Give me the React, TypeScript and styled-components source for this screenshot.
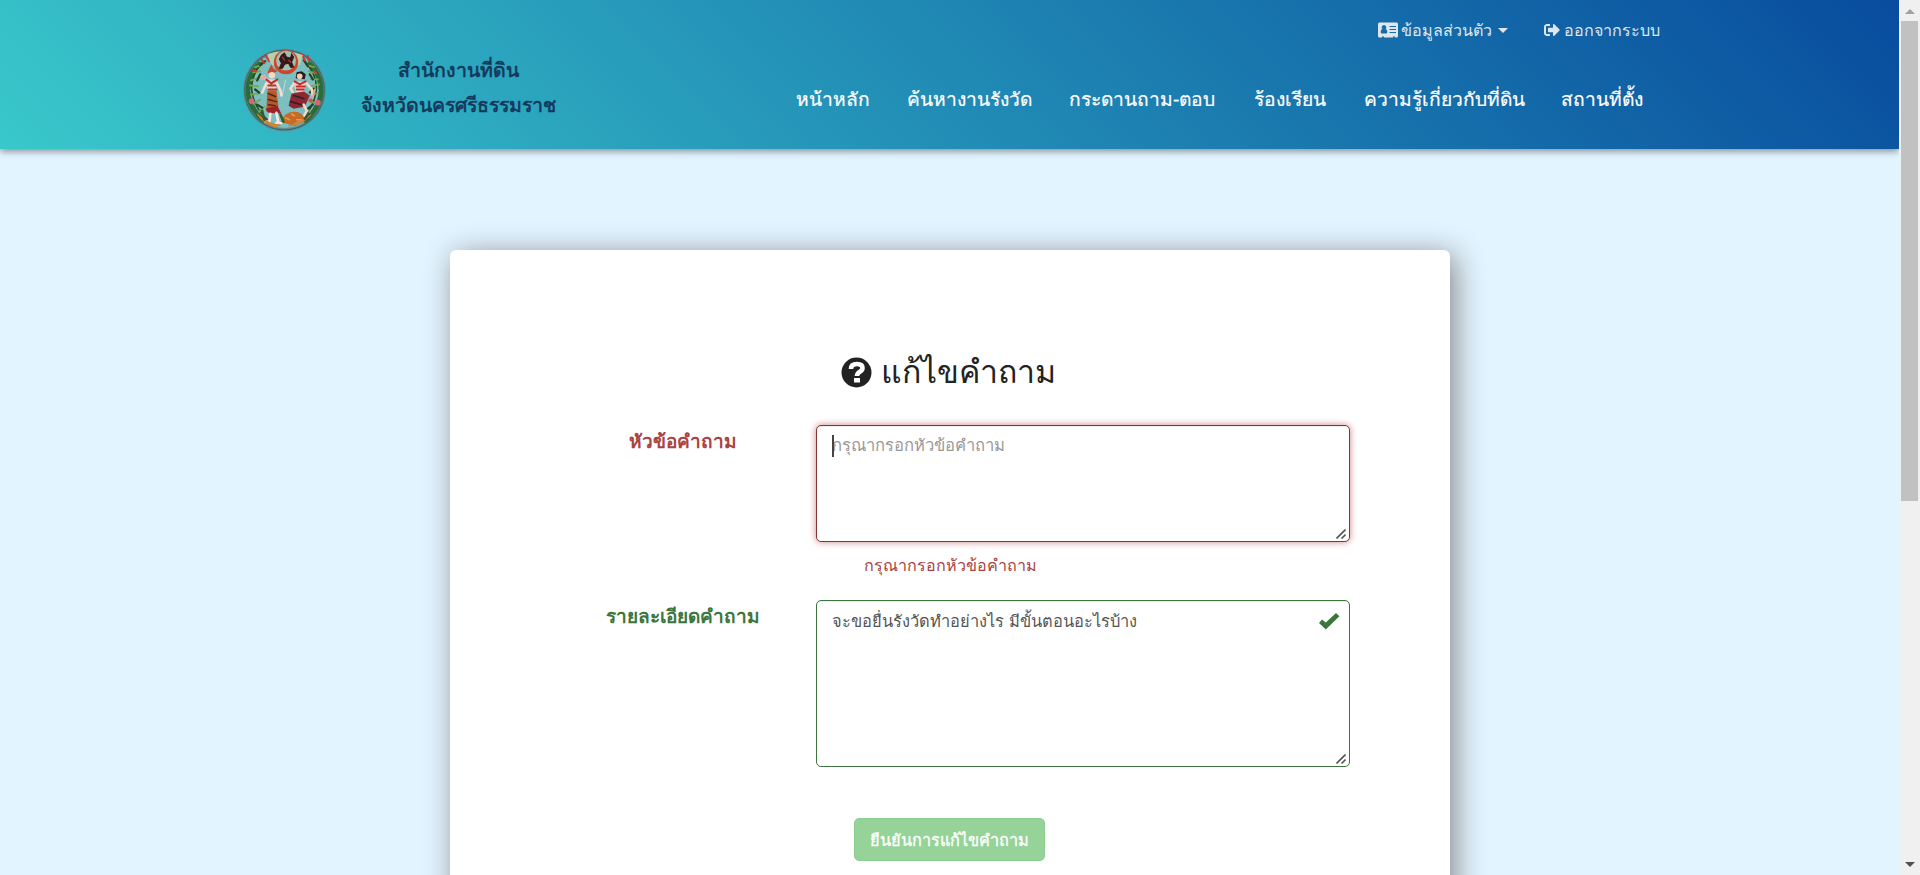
import React from 'react';
import styled, { createGlobalStyle } from 'styled-components';
import { FaSignOutAlt } from 'react-icons/fa';

const GlobalStyle = createGlobalStyle`
  *, *::before, *::after { box-sizing: border-box; }
  body {
    margin: 0;
    overflow: hidden;
    background: #e2f4ff;
    color: #222;
    font-family: 'Liberation Sans', sans-serif;
  }
`;

const Screen = styled.div`
  display: grid;
  grid-template-columns: minmax(0, 1fr) 21px;
  height: 875px;
  overflow: hidden;
`;

const Page = styled.div`
  height: 875px;
  overflow: hidden;
  background: #e2f4ff;
`;

const Header = styled.header`
  display: flex;
  height: 149px;
  padding-left: 242px;
  background: linear-gradient(45deg, #39c8cb, #084c9e);
  box-shadow: 0 2px 7px rgba(0, 0, 0, 0.45);
`;

const Brand = styled.div`
  display: flex;
  align-items: flex-start;
  gap: 31px;
  width: 554px;
  height: 85px;
  margin-top: 48px;
`;

const BrandName = styled.div`
  width: 200px;
  margin-top: 5px;
  color: #12375a;
  font-size: 19.5px;
  line-height: 35px;
  text-align: center;
  white-space: nowrap;
  -webkit-text-stroke: 0.6px #12375a;
`;

const Menus = styled.div`
  display: flex;
  flex-direction: column;
  gap: 43px;
  padding-top: 18px;
`;

const UserMenu = styled.div`
  display: flex;
  gap: 36px;
  padding-left: 582px;
  color: #dfe6ee;
`;

const UserLink = styled.a<{ $gap: number }>`
  display: flex;
  align-items: center;
  gap: ${(p) => p.$gap}px;
  font-size: 16.1px;
  line-height: 24px;
  white-space: nowrap;
`;

const Caret = styled.i`
  margin-left: 3px;
  border: 5px solid transparent;
  border-top-color: currentColor;
  border-bottom: 0;
`;

const Nav = styled.nav`
  display: flex;
`;

const NavLink = styled.a<{ $w: number }>`
  width: ${(p) => p.$w}px;
  color: #fff;
  font-size: 19.2px;
  line-height: 30px;
  white-space: nowrap;
  -webkit-text-stroke: 0.2px #fff;
`;

const Card = styled.main`
  width: 1000px;
  height: 800px;
  margin: 101px 0 0 450px;
  padding: 100px 100px 0;
  border-radius: 6px;
  background: #fff;
  box-shadow: 5px 5px 30px #888;
`;

const Title = styled.h1`
  display: flex;
  align-items: center;
  justify-content: center;
  gap: 9px;
  margin: 0 3px 31px 0;
  font-size: 32px;
  font-weight: 400;
  line-height: 44px;
  white-space: nowrap;
`;

const FormRow = styled.div`
  display: grid;
  grid-template-columns: 266px 534px;
  margin-bottom: 24px;
`;

const Label = styled.label<{ $color: string }>`
  padding-top: 2px;
  color: ${(p) => p.$color};
  font-size: 19px;
  font-weight: 700;
  line-height: 30px;
  text-align: center;
  white-space: nowrap;
`;

const Field = styled.div`
  position: relative;
`;

const InputBox = styled.div`
  position: relative;
`;

const TextArea = styled.textarea<{ $h: number; $border: string; $size: number; $glow?: boolean }>`
  display: block;
  width: 534px;
  height: ${(p) => p.$h}px;
  padding: 8px 15px;
  border: 1px solid ${(p) => p.$border};
  border-radius: 5px;
  outline: 0;
  background: #fff;
  box-shadow: ${(p) =>
    p.$glow
      ? 'inset 0 1px 1px rgba(0, 0, 0, 0.075), 0 0 7px #ce8483'
      : 'inset 0 1px 1px rgba(0, 0, 0, 0.075)'};
  color: #555;
  font-family: inherit;
  font-size: ${(p) => p.$size}px;
  line-height: 24px;
  resize: none;
  &::placeholder { color: #999; }
`;

const TextCursor = styled.span`
  position: absolute;
  top: 10px;
  left: 16px;
  width: 2px;
  height: 22px;
  background: #444;
`;

const ResizeGrip = styled.svg`
  position: absolute;
  right: 4px;
  bottom: 3px;
  width: 10px;
  height: 10px;
  stroke: #555;
  stroke-width: 1.6;
`;

const ValidMark = styled.svg`
  position: absolute;
  top: 13px;
  right: 10px;
  width: 21px;
  height: 17px;
  fill: #3c763d;
`;

const ErrorText = styled.div`
  margin-top: 11px;
  padding-left: 48px;
  color: #a94442;
  font-size: 16.1px;
  line-height: 24px;
`;

const ErrorRow = styled(FormRow)`
  margin-bottom: 23px;
`;

const Actions = styled.div`
  display: flex;
  justify-content: center;
  padding: 27px 1px 0 0;
`;

const SubmitButton = styled.button`
  width: 191px;
  height: 43px;
  padding: 0;
  border: 1px solid #8bcf8d;
  border-radius: 5px;
  background: #96d398;
  color: #fff;
  font-family: inherit;
  font-size: 16.3px;
  line-height: 24px;
  white-space: nowrap;
  -webkit-text-stroke: 0.3px #fff;
`;

const ScrollTrack = styled.div`
  display: flex;
  flex-direction: column;
  align-items: center;
  height: 875px;
  background: #f0f0f0;
`;

const ScrollThumb = styled.div`
  width: 17px;
  height: 480px;
  margin: 7px 0 361px;
  background: #c1c1c1;
`;

const ScrollArrow = styled.i<{ $down?: boolean }>`
  margin-top: ${(p) => (p.$down ? 0 : 9)}px;
  border: 5px solid transparent;
  ${(p) => (p.$down ? 'border-top-color: #505050; border-bottom: 0;' : 'border-bottom-color: #a0a0a0; border-top: 0;')}
`;

const Emblem = () => (
  <svg width="85" height="85" viewBox="0 0 84 84" fill="none" strokeLinecap="round">
    <circle cx="42" cy="41.5" r="41" fill="#5f8f92" />
    <circle cx="42" cy="41.5" r="39.3" stroke="#37696f" strokeWidth="1.2" strokeDasharray="1.5 1" />
    <circle cx="42" cy="41.5" r="37.5" fill="#7dbfc0" />
    <path d="M17 16Q5 28 6 45q2 15 16 27M67 16q12 12 11 29-2 15-16 27" stroke="#2c6b39" strokeWidth="5" strokeDasharray="3 2" />
    <path d="M21 13Q7 29 10 44q2 14 15 27M62 13q14 16 11 31-2 14-14 27" stroke="#234d2b" strokeWidth="1.6" />
    <path d="M20 17l-7 2m5 4l-7 1m4 6l-6 2m7 6l-8-1m8 8l-7 1m9 5l-7 4m11 3l-5 5M64 17l7 2m-5 4l7 2m-5 6l7 0m-7 7l8-2m-8 9l7 0m-9 7l7 3m-11 3l5 5" stroke="#7aa654" strokeWidth="1.8" />
    <path d="M23 13l-5 4m0 9l-3 6m-2 9l4 3m-2 12l5 3M61 12l4 6m2 8l3 5m1 9l-4 4m3 12l-5 4" stroke="#204827" strokeWidth="2.2" />
    <path d="M23 7l4 6m-8-2l3 4m37-9l3 6m3-4l1 5M11 22l3 1m57 0l2 2" stroke="#ce3a32" strokeWidth="2" />
    <path d="M25 6Q42 0 60 7L57 17H29z" fill="#b9cfaa" />
    <circle cx="43.5" cy="14" r="12" fill="#cf4430" />
    <circle cx="43.5" cy="12.5" r="9.8" fill="#a5bfae" />
    <path d="M39 7l3-2 2 4 4 1 1-4 2 3-2 5 2 5h-3l-2-4-4 1-2 4-3 0 2-5-2-4z" fill="#35191a" stroke="#35191a" />
    <path d="M40 9l2 3m4 0l2 2" stroke="#b64331" />
    <path d="M43 32l-3 14" stroke="#bed8d2" />
    <path d="M27 20l2-4 2 4 4 3-4 2h-6z" fill="#c54a30" />
    <circle cx="29.5" cy="27" r="3.2" fill="#f2d9c6" />
    <path d="M26 32l-6-4m4 7l-4 9m14-10l4 8 1 5" stroke="#f2dfd2" strokeWidth="2.6" />
    <path d="M24 31h11l-2 12h-8z" fill="#e5d8cc" />
    <path d="M24 31l5 4 6-4m-9 6h7m-7 4h8" stroke="#bf2e2c" strokeWidth="2" />
    <path d="M25 42h9l2 15-4 6H24z" fill="#b65b27" />
    <path d="M26 45l7 3m-7 3l8 2m-8 3l7 1" stroke="#5a2022" strokeWidth="1.5" />
    <path d="M23 60l12-3 4 8-13-1z" fill="#a02029" />
    <path d="M28 65l-1 8m7-9l2 10m-10-1h-3m11 1h5" stroke="#f5e7da" strokeWidth="2.6" />
    <path d="M53 30l1-6 5-1 4 3-1 5z" fill="#291b1d" />
    <circle cx="57" cy="28" r="2.8" fill="#edcfbb" />
    <path d="M52 34l-4 6 4 7m11-13l6 7 1 6" stroke="#f0d9cd" strokeWidth="2.6" />
    <path d="M51 33h12l-2 11h-8z" fill="#ead5c9" />
    <path d="M52 33l5 3 6-3m-9 5h8m-8 3h7" stroke="#c52b2e" strokeWidth="2" />
    <path d="M49 45l12-2 6 4-5 11-11 2-5-3z" fill="#8e2731" />
    <path d="M51 47l10 3m-13 3l11 3" stroke="#311f29" strokeWidth="1.6" />
    <path d="M61 56l3 6-4 8" stroke="#f2d9ca" strokeWidth="2.6" />
    <path d="M38 73q5-11 14-10 8 0 11 9l-11 5z" fill="#c56a27" />
    <path d="M43 69l4 2m2-6l3 2m2 4l4 0" stroke="#e8a04c" strokeWidth="1.5" />
    <path d="M15 65q11 11 23 11l-6 2q-12-4-17-13zM68 66q-10 10-22 11" fill="#d48a3d" stroke="#d07a31" />
    <path d="M20 62l2 9m19 2l-3-7m28-1l-4 5" stroke="#315e30" strokeWidth="2.5" />
    <circle cx="9.5" cy="52.5" r="2.8" fill="#d66378" />
    <circle cx="75" cy="54" r="2.8" fill="#d66378" />
    <circle cx="68" cy="52" r="2" fill="#cc5262" />
    <path d="M18 28l5-2 1 4-5 2z" fill="#e6a6a4" />
    <path d="M72 41l-2 8" stroke="#e0a19b" strokeWidth="2" />
  </svg>
);

const ContactCardIcon = () => (
  <svg width="20" height="16" viewBox="0 0 20 16">
    <path
      fill="currentColor"
      fillRule="evenodd"
      d="M1.5.5h17A1.5 1.5 0 0 1 20 2v12a1.5 1.5 0 0 1-1.5 1.5H17v-1h-2v1H6v-1H4v1H1.5A1.5 1.5 0 0 1 0 14V2A1.5 1.5 0 0 1 1.5.5zM6 3a2.3 2.5 0 0 0-1.6 4.3C3.300 7.500 2.700 8.500 2.700 10q0 1.500 1.200 1.500h4.200q1.200 0 1.200-1.500c0-1.500-.6-2.500-1.700-2.700A2.300 2.500 0 0 0 6 3zm5.500 1v1H18V4zm0 3v1H18V7zm0 3v1H18v-1z"
    />
  </svg>
);

const QuestionIcon = () => (
  <svg width="31" height="31" viewBox="0 0 31 31" fill="none">
    <circle cx="15.500" cy="15.500" r="15" fill="#222" />
    <path d="M10 12q0-5 6-5 5.500 0 5.500 4 0 2.200-2.600 3.700Q16 16.300 16 19" stroke="#fff" strokeWidth="4.600" />
    <path d="M13 21h6v4.500h-6z" fill="#fff" />
  </svg>
);

const Grip = () => (
  <ResizeGrip viewBox="0 0 10 10">
    <path d="M.5 9.500l9-9M5.500 9.500l4-4" />
  </ResizeGrip>
);

const navItems = [
  { text: 'หน้าหลัก', width: 111 },
  { text: 'ค้นหางานรังวัด', width: 162 },
  { text: 'กระดานถาม-ตอบ', width: 185 },
  { text: 'ร้องเรียน', width: 110 },
  { text: 'ความรู้เกี่ยวกับที่ดิน', width: 197 },
  { text: 'สถานที่ตั้ง', width: 84 },
];

export default function App() {
  return (
    <>
      <GlobalStyle />
      <Screen>
        <Page>
          <Header>
            <Brand>
              <Emblem />
              <BrandName>
                สำนักงานที่ดิน
                <br />
                จังหวัดนครศรีธรรมราช
              </BrandName>
            </Brand>
            <Menus>
              <UserMenu>
                <UserLink $gap={3}>
                  <ContactCardIcon />
                  ข้อมูลส่วนตัว
                  <Caret />
                </UserLink>
                <UserLink $gap={4}>
                  <FaSignOutAlt size={16} />
                  ออกจากระบบ
                </UserLink>
              </UserMenu>
              <Nav>
                {navItems.map((item) => (
                  <NavLink key={item.text} $w={item.width}>
                    {item.text}
                  </NavLink>
                ))}
              </Nav>
            </Menus>
          </Header>
          <Card>
            <Title>
              <QuestionIcon />
              แก้ไขคำถาม
            </Title>
            <ErrorRow>
              <Label $color="#a94442">หัวข้อคำถาม</Label>
              <Field>
                <InputBox>
                  <TextArea $h={117} $size={16.6} $border="#843534" $glow placeholder="กรุณากรอกหัวข้อคำถาม" />
                  <TextCursor />
                  <Grip />
                </InputBox>
                <ErrorText>กรุณากรอกหัวข้อคำถาม</ErrorText>
              </Field>
            </ErrorRow>
            <FormRow>
              <Label $color="#3c763d">รายละเอียดคำถาม</Label>
              <Field>
                <TextArea
                  $h={167}
                  $size={16.4}
                  $border="#3c763d"
                  defaultValue="จะขอยื่นรังวัดทำอย่างไร มีขั้นตอนอะไรบ้าง"
                />
                <ValidMark viewBox="0 0 21 17">
                  <path d="M0 10l3-3.500 3.800 3L17 0l3.400 3.300L6.800 16.500z" />
                </ValidMark>
                <Grip />
              </Field>
            </FormRow>
            <Actions>
              <SubmitButton>ยืนยันการแก้ไขคำถาม</SubmitButton>
            </Actions>
          </Card>
        </Page>
        <ScrollTrack>
          <ScrollArrow />
          <ScrollThumb />
          <ScrollArrow $down />
        </ScrollTrack>
      </Screen>
    </>
  );
}
